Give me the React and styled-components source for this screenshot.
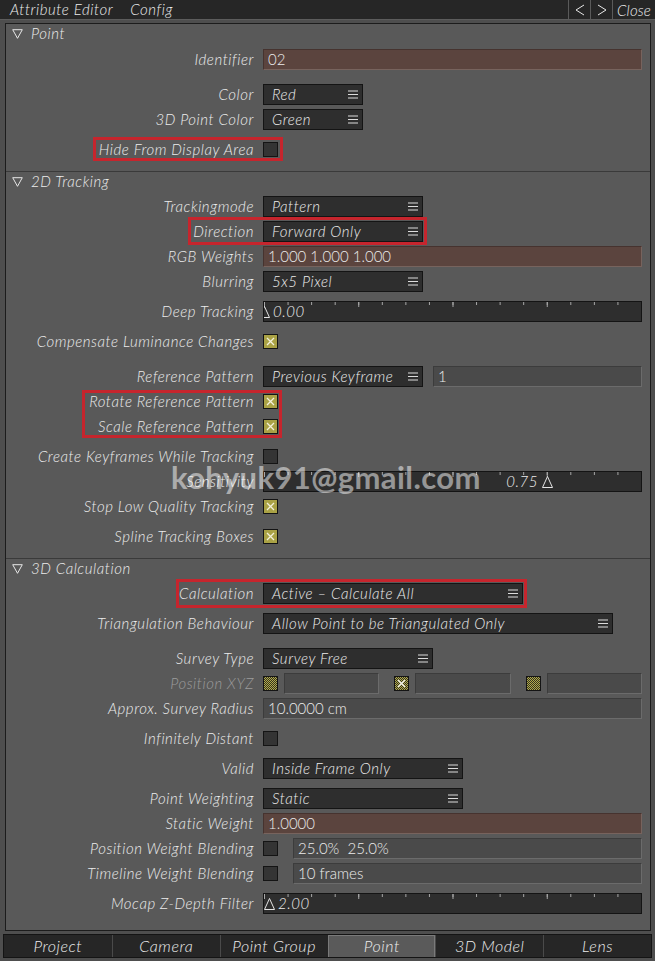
import React from "react";
import styled, { createGlobalStyle } from "styled-components";

const GlobalStyle = createGlobalStyle`
  html, body {
    margin: 0;
    padding: 0;
    background: #4e4e4e;
  }
`;

const Screen = styled.div`
  position: relative;
  width: 655px;
  height: 961px;
  display: flex;
  flex-direction: column;
  background: #4e4e4e;
  color: #ececec;
  font-family: Lato, "DejaVu Sans", sans-serif;
  font-style: italic;
  font-weight: 300;
  font-size: 15px;
  letter-spacing: 0.55px;
  overflow: hidden;
`;

// top menu strip
const TopBar = styled.div`
  flex: none;
  height: 19px;
  display: flex;
  background: #262626;
  border-bottom: 1px solid #5c5c5c;
`;

const Menu = styled.div`
  display: flex;
  align-items: center;
  gap: 17px;
  padding-left: 10px;
  flex: 1;
  line-height: 19px;
`;

const TopButton = styled.div`
  width: ${(p) => p.$w}px;
  display: flex;
  align-items: center;
  justify-content: center;
  border-left: 1px solid #5a5a5a;
  letter-spacing: 0.2px;
`;

const Chevron = ({ dir }) => (
  <svg width="10" height="12" viewBox="0 0 10 12">
    <path
      d={dir === "left" ? "M9 1L1 6l8 5" : "M1 1l8 5-8 5"}
      fill="none"
      stroke="#e8e8e8"
      strokeWidth="1"
    />
  </svg>
);

const Panel = styled.div`
  flex: 1;
  margin: 3px 4px 0 5px;
  border: 1px solid #1c1c1c;
  background: #595959;
  display: flex;
  flex-direction: column;
`;

const Section = styled.div`
  display: flex;
  flex-direction: column;
  ${(p) => p.$divided && "margin-top: 9px; border-top: 1px solid #3a3a3a;"}
`;

const SectionHead = styled.div`
  height: 20px;
  display: flex;
  align-items: center;
  gap: 8px;
  padding-left: 6px;
  & > span {
    padding-bottom: 2px;
  }
`;

const Row = styled.div`
  position: relative;
  height: 25px;
  margin-top: ${(p) => p.$mt || 0}px;
  padding-right: 8px;
  display: grid;
  grid-template-columns: 248px 1fr;
  column-gap: 9px;
  align-items: center;
`;

const Label = styled.div`
  text-align: right;
  white-space: nowrap;
  padding-bottom: 2px;
  color: ${(p) => (p.$dim ? "#9c9c9c" : "#ececec")};
`;

const Controls = styled.div`
  display: flex;
  align-items: center;
  gap: ${(p) => p.$gap || 0}px;
  min-width: 0;
`;

const Group = styled.div`
  flex: 1;
  display: flex;
  align-items: center;
  gap: 6px;
`;

const DropBox = styled.div`
  flex: none;
  width: ${(p) => p.$w}px;
  height: 21px;
  box-sizing: border-box;
  border: 1px solid #141414;
  background: #2e2e2e;
  display: flex;
  align-items: center;
  justify-content: space-between;
  padding: 0 4px 0 8px;
  white-space: nowrap;
  & > span {
    padding-bottom: 1px;
  }
`;

const Field = styled.div`
  flex: 1;
  height: 21px;
  box-sizing: border-box;
  padding: 0 4px;
  line-height: 18px;
  font-style: normal;
  letter-spacing: 0;
  white-space: pre;
  background: ${(p) => (p.$tone === "brown" ? "#5b443e" : "#4a4a4a")};
  border: 1px solid;
  border-color: ${(p) =>
    p.$tone === "brown"
      ? "#46332f #77635d #77635d #46332f"
      : "#3c3c3c #6b6b6b #6b6b6b #3c3c3c"};
`;

const Box = styled.div`
  flex: none;
  width: 15px;
  height: 15px;
  box-sizing: border-box;
  border: 1px solid #141414;
  display: flex;
  align-items: center;
  justify-content: center;
  background: ${(p) =>
    p.$hatch
      ? "repeating-conic-gradient(#b2aa4c 0 25%, #34331f 0 50%) 0 0 / 2px 2px"
      : p.$on
      ? "#aaa245"
      : "#343434"};
`;

const SliderBar = styled.div`
  position: relative;
  flex: 1;
  height: 21px;
  box-sizing: border-box;
  border: 1px solid #141414;
  overflow: hidden;
  background:
    linear-gradient(to right, #a8a8a8 1px, transparent 1px) 0 0 / 25% 5px repeat-x,
    linear-gradient(to right, #a8a8a8 1px, transparent 1px) 0 0 / 6.25% 3px repeat-x,
    #2e2e2e;
`;

const SliderValue = styled.span`
  position: absolute;
  top: 0;
  line-height: 18px;
  white-space: nowrap;
`;

const Marker = styled.svg`
  position: absolute;
  top: 4px;
  width: 11px;
  height: 12px;
  margin-left: -5.5px;
`;

// red annotation frames drawn over the rows
const Highlight = styled.div`
  position: absolute;
  left: ${(p) => p.$x}px;
  top: ${(p) => p.$y}px;
  width: ${(p) => p.$w}px;
  height: ${(p) => p.$h}px;
  box-sizing: border-box;
  border: 3px solid #c6252d;
  pointer-events: none;
`;

const TabBar = styled.div`
  flex: none;
  height: 24px;
  margin: 3px;
  display: grid;
  grid-template-columns: repeat(6, 1fr);
  background: #262626;
  border: 1px solid #141414;
  box-sizing: border-box;
`;

const Tab = styled.div`
  display: flex;
  align-items: center;
  justify-content: center;
  font-size: 16px;
  padding-bottom: 1px;
  border-left: 1px solid ${(p) => (p.$active ? "#7a7a7a" : "#4a4a4a")};
  background: ${(p) => (p.$active ? "#5a5a5a" : "transparent")};
  ${(p) => p.$active && "box-shadow: inset 0 1px 0 #7a7a7a, inset -1px 0 0 #7a7a7a;"}
  &:first-child {
    border-left: none;
  }
`;

const Watermark = styled.div`
  position: absolute;
  left: 171px;
  top: 458px;
  font-family: Lato, sans-serif;
  font-style: normal;
  font-weight: 700;
  font-size: 31px;
  letter-spacing: 0.4px;
  color: rgba(255, 255, 255, 0.5);
  pointer-events: none;
  white-space: nowrap;
`;

const Hamburger = () => (
  <svg width="10" height="9" viewBox="0 0 10 9">
    <path d="M0 1h10M0 4.5h10M0 8h10" stroke="#dcdcdc" strokeWidth="1" />
  </svg>
);

const OpenTriangle = () => (
  <svg width="11" height="10" viewBox="0 0 11 10">
    <path d="M0.7 0.7h9.6L5.5 9.3z" fill="none" stroke="#e6e6e6" strokeWidth="1" />
  </svg>
);

const Dropdown = ({ w, children }) => (
  <DropBox $w={w}>
    <span>{children}</span>
    <Hamburger />
  </DropBox>
);

const Check = ({ on, hatch }) => (
  <Box $on={on} $hatch={hatch}>
    {on && (
      <svg width="9" height="9" viewBox="0 0 9 9">
        <path d="M1 1l7 7M8 1l-7 7" stroke={hatch ? "#eeeeee" : "#f3f1dc"} strokeWidth="1.3" />
      </svg>
    )}
  </Box>
);

// pos: marker position in px from the left edge of the bar
const Slider = ({ pos, text, side }) => (
  <SliderBar>
    <Marker viewBox="0 0 11 12" style={{ left: pos }}>
      <path d="M0.5 11.5L5.5 0.5L10.5 11.5Z" fill="none" stroke="#e4e4e4" strokeWidth="1" />
    </Marker>
    {side === "left" ? (
      <SliderValue style={{ right: `calc(100% - ${pos - 9}px)` }}>{text}</SliderValue>
    ) : (
      <SliderValue style={{ left: pos + 9 }}>{text}</SliderValue>
    )}
  </SliderBar>
);

const tabs = ["Project", "Camera", "Point Group", "Point", "3D Model", "Lens"];

export default function App() {
  return (
    <Screen>
      <GlobalStyle />
      <TopBar>
        <Menu>
          <span>Attribute Editor</span>
          <span>Config</span>
        </Menu>
        <TopButton $w={21}>
          <Chevron dir="left" />
        </TopButton>
        <TopButton $w={21}>
          <Chevron dir="right" />
        </TopButton>
        <TopButton $w={42}>Close</TopButton>
      </TopBar>

      <Panel>
        <Section>
          <SectionHead>
            <OpenTriangle />
            <span>Point</span>
          </SectionHead>
          <Row $mt={3}>
            <Label>Identifier</Label>
            <Controls>
              <Field $tone="brown">02</Field>
            </Controls>
          </Row>
          <Row $mt={10}>
            <Label>Color</Label>
            <Controls>
              <Dropdown w={100}>Red</Dropdown>
            </Controls>
          </Row>
          <Row>
            <Label>3D Point Color</Label>
            <Controls>
              <Dropdown w={100}>Green</Dropdown>
            </Controls>
          </Row>
          <Row $mt={5}>
            <Label>Hide From Display Area</Label>
            <Controls>
              <Check />
            </Controls>
            <Highlight $x={87} $y={0} $w={190} $h={24} />
          </Row>
        </Section>

        <Section $divided>
          <SectionHead>
            <OpenTriangle />
            <span>2D Tracking</span>
          </SectionHead>
          <Row $mt={2}>
            <Label>Trackingmode</Label>
            <Controls>
              <Dropdown w={160}>Pattern</Dropdown>
            </Controls>
          </Row>
          <Row>
            <Label>Direction</Label>
            <Controls>
              <Dropdown w={160}>Forward Only</Dropdown>
            </Controls>
            <Highlight $x={182} $y={-2} $w={239} $h={28} />
          </Row>
          <Row>
            <Label>RGB Weights</Label>
            <Controls>
              <Field $tone="brown">1.000 1.000 1.000</Field>
            </Controls>
          </Row>
          <Row>
            <Label>Blurring</Label>
            <Controls>
              <Dropdown w={160}>5x5 Pixel</Dropdown>
            </Controls>
          </Row>
          <Row $mt={5}>
            <Label>Deep Tracking</Label>
            <Controls>
              <Slider pos={0} text="0.00" />
            </Controls>
          </Row>
          <Row $mt={5}>
            <Label>Compensate Luminance Changes</Label>
            <Controls>
              <Check on />
            </Controls>
          </Row>
          <Row $mt={10}>
            <Label>Reference Pattern</Label>
            <Controls $gap={10}>
              <Dropdown w={160}>Previous Keyframe</Dropdown>
              <Field>1</Field>
            </Controls>
          </Row>
          <Row>
            <Label>Rotate Reference Pattern</Label>
            <Controls>
              <Check on />
            </Controls>
            <Highlight $x={76} $y={1} $w={200} $h={48} />
          </Row>
          <Row>
            <Label>Scale Reference Pattern</Label>
            <Controls>
              <Check on />
            </Controls>
          </Row>
          <Row $mt={5}>
            <Label>Create Keyframes While Tracking</Label>
            <Controls>
              <Check />
            </Controls>
          </Row>
          <Row>
            <Label>Sensitivity</Label>
            <Controls>
              <Slider pos={283} text="0.75" side="left" />
            </Controls>
          </Row>
          <Row>
            <Label>Stop Low Quality Tracking</Label>
            <Controls>
              <Check on />
            </Controls>
          </Row>
          <Row $mt={5}>
            <Label>Spline Tracking Boxes</Label>
            <Controls>
              <Check on />
            </Controls>
          </Row>
        </Section>

        <Section $divided>
          <SectionHead>
            <OpenTriangle />
            <span>3D Calculation</span>
          </SectionHead>
          <Row $mt={2}>
            <Label>Calculation</Label>
            <Controls>
              <Dropdown w={260}>Active – Calculate All</Dropdown>
            </Controls>
            <Highlight $x={170} $y={-2} $w={351} $h={29} />
          </Row>
          <Row $mt={5}>
            <Label>Triangulation Behaviour</Label>
            <Controls>
              <Dropdown w={350}>Allow Point to be Triangulated Only</Dropdown>
            </Controls>
          </Row>
          <Row $mt={10}>
            <Label>Survey Type</Label>
            <Controls>
              <Dropdown w={170}>Survey Free</Dropdown>
            </Controls>
          </Row>
          <Row>
            <Label $dim>Position XYZ</Label>
            <Controls $gap={15}>
              <Group>
                <Check hatch />
                <Field />
              </Group>
              <Group>
                <Check hatch on />
                <Field />
              </Group>
              <Group>
                <Check hatch />
                <Field />
              </Group>
            </Controls>
          </Row>
          <Row>
            <Label>Approx. Survey Radius</Label>
            <Controls>
              <Field>10.0000 cm</Field>
            </Controls>
          </Row>
          <Row $mt={5}>
            <Label>Infinitely Distant</Label>
            <Controls>
              <Check />
            </Controls>
          </Row>
          <Row $mt={5}>
            <Label>Valid</Label>
            <Controls>
              <Dropdown w={200}>Inside Frame Only</Dropdown>
            </Controls>
          </Row>
          <Row $mt={5}>
            <Label>Point Weighting</Label>
            <Controls>
              <Dropdown w={200}>Static</Dropdown>
            </Controls>
          </Row>
          <Row>
            <Label>Static Weight</Label>
            <Controls>
              <Field $tone="brown">1.0000</Field>
            </Controls>
          </Row>
          <Row>
            <Label>Position Weight Blending</Label>
            <Controls $gap={15}>
              <Check />
              <Field>25.0%  25.0%</Field>
            </Controls>
          </Row>
          <Row>
            <Label>Timeline Weight Blending</Label>
            <Controls $gap={15}>
              <Check />
              <Field>10 frames</Field>
            </Controls>
          </Row>
          <Row $mt={5}>
            <Label>Mocap Z-Depth Filter</Label>
            <Controls>
              <Slider pos={5} text="2.00" />
            </Controls>
          </Row>
        </Section>
      </Panel>

      <TabBar>
        {tabs.map((t) => (
          <Tab key={t} $active={t === "Point"}>
            {t}
          </Tab>
        ))}
      </TabBar>

      <Watermark>kohyuk91@gmail.com</Watermark>
    </Screen>
  );
}
